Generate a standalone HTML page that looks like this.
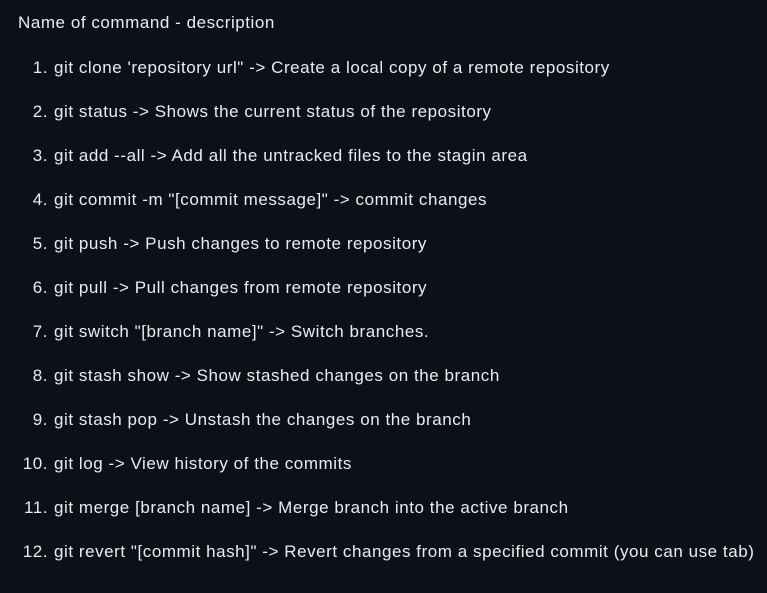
<!DOCTYPE html>
<html><head><meta charset="utf-8"><style>
html,body{margin:0;padding:0;background:#0d1117;width:767px;height:593px;overflow:hidden}
body{font-family:"Liberation Sans",Arial,sans-serif;font-size:17px;color:#e6edf3;letter-spacing:0.55px}
.l{position:absolute;white-space:nowrap;line-height:20px}
.n{position:absolute;right:719px;text-align:right;white-space:nowrap;line-height:20px}
</style></head><body>
<div class="l" style="left:18px;top:13px">Name of command - description</div>
<div class="n" style="top:58px">1.</div><div class="l" style="left:54px;top:58px">git clone 'repository url" -&gt; Create a local copy of a remote repository</div>
<div class="n" style="top:102px">2.</div><div class="l" style="left:54px;top:102px">git status -&gt; Shows the current status of the repository</div>
<div class="n" style="top:146px">3.</div><div class="l" style="left:54px;top:146px">git add --all -&gt; Add all the untracked files to the stagin area</div>
<div class="n" style="top:190px">4.</div><div class="l" style="left:54px;top:190px">git commit -m "[commit message]" -&gt; commit changes</div>
<div class="n" style="top:234px">5.</div><div class="l" style="left:54px;top:234px">git push -&gt; Push changes to remote repository</div>
<div class="n" style="top:278px">6.</div><div class="l" style="left:54px;top:278px">git pull -&gt; Pull changes from remote repository</div>
<div class="n" style="top:322px">7.</div><div class="l" style="left:54px;top:322px">git switch "[branch name]" -&gt; Switch branches.</div>
<div class="n" style="top:366px">8.</div><div class="l" style="left:54px;top:366px">git stash show -&gt; Show stashed changes on the branch</div>
<div class="n" style="top:410px">9.</div><div class="l" style="left:54px;top:410px">git stash pop -&gt; Unstash the changes on the branch</div>
<div class="n" style="top:454px">10.</div><div class="l" style="left:54px;top:454px">git log -&gt; View history of the commits</div>
<div class="n" style="top:498px">11.</div><div class="l" style="left:54px;top:498px">git merge [branch name] -&gt; Merge branch into the active branch</div>
<div class="n" style="top:542px">12.</div><div class="l" style="left:54px;top:542px">git revert "[commit hash]" -&gt; Revert changes from a specified commit (you can use tab)</div>
</body></html>
